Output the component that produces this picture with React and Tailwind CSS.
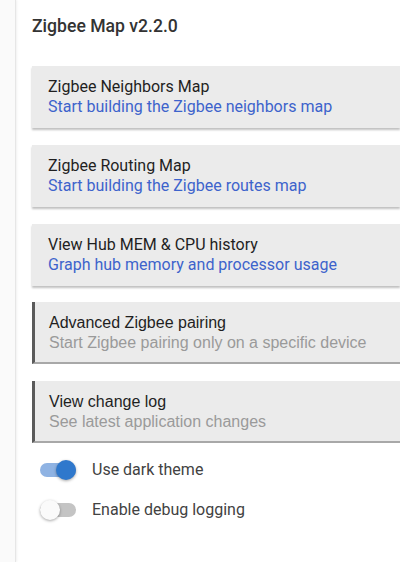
import React, { useState } from 'react';

const items = [
  { title: 'Zigbee Neighbors Map', sub: 'Start building the Zigbee neighbors map', link: true },
  { title: 'Zigbee Routing Map', sub: 'Start building the Zigbee routes map', link: true },
  { title: 'View Hub MEM & CPU history', sub: 'Graph hub memory and processor usage', link: true },
  { title: 'Advanced Zigbee pairing', sub: 'Start Zigbee pairing only on a specific device', link: false },
  { title: 'View change log', sub: 'See latest application changes', link: false },
];

const Toggle = ({ on, onClick }) => (
  <button onClick={onClick} className="relative w-[36px] h-[20px] flex items-center shrink-0">
    <span className={`block w-[36px] h-[14px] rounded-full ${on ? 'bg-[#8fb3e3]' : 'bg-[#c4c4c4]'}`} />
    <span
      className={`absolute top-0 w-[20px] h-[20px] rounded-full shadow-[0_1px_3px_rgba(0,0,0,0.35)] ${
        on ? 'left-[16px] bg-[#2f78cc]' : 'left-0 bg-[#fafafa]'
      }`}
    />
  </button>
);

export default function App() {
  const [dark, setDark] = useState(true);
  const [debug, setDebug] = useState(false);

  return (
    <div className="flex w-[400px] h-[562px] overflow-hidden bg-white" style={{ fontFamily: 'Roboto, sans-serif' }}>
      <div className="w-[16px] shrink-0 bg-[#fafafa] border-r border-[#e6e6e6] shadow-[1px_0_2px_rgba(0,0,0,0.06)]" />
      <div className="flex-1 pl-4 pt-[14px]">
        <h1 className="text-[17.6px] leading-6 font-medium text-[#333]">Zigbee Map v2.2.0</h1>

        <div className="mt-[28px] flex flex-col gap-[16.75px]">
          {items.map((it) =>
            it.link ? (
              <div
                key={it.title}
                className="h-[62px] bg-[#ebebeb] pl-4 pt-[11px] shadow-[0_2px_2px_rgba(0,0,0,0.25)]"
              >
                <div className="text-[16px] leading-5 text-[#1f1f1f]">{it.title}</div>
                <div className="text-[16px] leading-5 text-[#3d63cc]">{it.sub}</div>
              </div>
            ) : (
              <div
                key={it.title}
                className="h-[62px] bg-[#ebebeb] pl-[14px] pt-[11px] border-l-[3px] border-[#5a5a5a] border-b-2 border-b-[#a8a8a8]"
                style={{ fontFamily: '"Liberation Sans", Arial, sans-serif' }}
              >
                <div className="text-[16px] leading-5 text-[#1f1f1f]">{it.title}</div>
                <div className="text-[16px] leading-5 text-[#9a9a9a]">{it.sub}</div>
              </div>
            )
          )}
        </div>

        <div className="mt-[17px] pl-2 flex flex-col gap-5">
          <label className="flex items-center gap-4 h-[20px]">
            <Toggle on={dark} onClick={() => setDark(!dark)} />
            <span className="text-[16px] text-[#424242]">Use dark theme</span>
          </label>
          <label className="flex items-center gap-4 h-[20px]">
            <Toggle on={debug} onClick={() => setDebug(!debug)} />
            <span className="text-[16px] text-[#424242]">Enable debug logging</span>
          </label>
        </div>
      </div>
    </div>
  );
}
